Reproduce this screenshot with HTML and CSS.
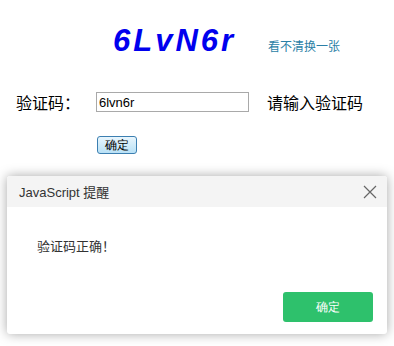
FILE: index.html
```html
<!DOCTYPE html>
<html lang='zh'>
  <head>
    <meta charset='utf-8'>
    <title>验证码</title>
    <link rel="stylesheet" href="styles.css">
  </head>
  <body>
    <div class="page">
      <div class="code-row">
        <span class="code">6LvN6r</span>
        <a class="refresh" href="#">看不清换一张</a>
      </div>
      <form class="form">
        <div class="field">
          <label for="codeInput">验证码：</label>
          <input id="codeInput" type="text" value="6lvn6r">
          <span class="hint">请输入验证码</span>
        </div>
        <div class="actions">
          <button type="button" class="btn-old">确定</button>
        </div>
      </form>
    </div>

    <!-- alert dialog -->
    <div class="dialog">
      <div class="dialog-head">
        <span>JavaScript 提醒</span>
        <svg class="close" width="14" height="14" viewBox="0 0 14 14">
          <path d="M1 1L13 13M13 1L1 13" stroke="#666" stroke-width="1.2" fill="none"/>
        </svg>
      </div>
      <div class="dialog-body">验证码正确！</div>
      <div class="dialog-foot">
        <button type="button" class="btn-ok">确定</button>
      </div>
    </div>
  </body>
</html>
```
FILE: styles.css
```css
/* general */
* { box-sizing: border-box; }
body { margin: 0; font-family: "Liberation Sans", "Noto Sans CJK SC", sans-serif; background: #fff; }
.page { padding-top: 23px; }

/* captcha */
.code-row { display: flex; align-items: baseline; padding-left: 113px; height: 40px; }
.code { font: italic bold 31px "Liberation Sans", sans-serif; color: #0000ee; letter-spacing: 3px; }
.refresh { margin-left: 32px; font-size: 12px; color: #2b7fa6; text-decoration: none; }

/* form */
.form { padding-top: 28px; }
.field { display: flex; align-items: center; height: 22px; padding-left: 16px; font-size: 16px; color: #000; }
.field label { width: 80px; }
.field input { width: 153px; height: 20px; border: 1px solid #a9a9a9; padding: 0 2px; font: 13px "Liberation Sans", sans-serif; color: #000; }
.hint { margin-left: 18px; }
.actions { padding: 22px 0 0 97px; }
.btn-old { height: 18px; width: 40px; padding: 0; font-size: 12px; border: 1px solid #3c7fb1; border-radius: 3px; background: linear-gradient(#e9f6fd, #b9e1f6); color: #000; }

/* alert dialog */
.dialog { position: absolute; left: 7px; top: 176px; width: 380px; height: 158px; background: #fff; border-radius: 3px; box-shadow: 0 0 12px rgba(0,0,0,.35); display: flex; flex-direction: column; }
.dialog-head { display: flex; justify-content: space-between; align-items: center; height: 31px; padding: 0 10px 0 12px; background: #f4f4f4; font-size: 13px; color: #333; border-radius: 3px 3px 0 0; }
.close { margin-top: 1px; }
.dialog-body { padding: 29px 0 0 30px; font-size: 13px; color: #333; flex: 1; }
.dialog-foot { display: flex; justify-content: flex-end; padding: 0 14px 12px 0; }
.btn-ok { width: 90px; height: 30px; border: 0; border-radius: 3px; background: #2ec16c; color: #fff; font-size: 12px; }
```
